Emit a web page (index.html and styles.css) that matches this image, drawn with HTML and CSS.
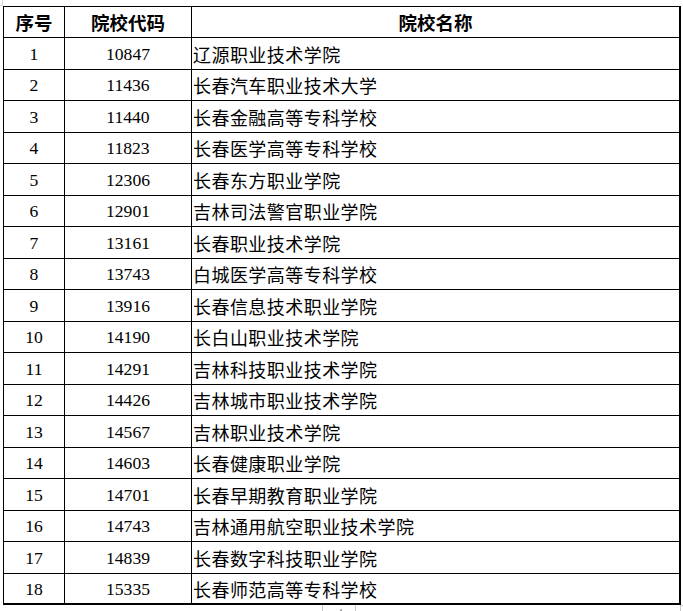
FILE: index.html
```html
<!DOCTYPE html>
<html lang="zh-CN">
<head>
<meta charset="utf-8">
<title>院校名单</title>
<link rel="stylesheet" href="styles.css">
</head>
<body>
<div class="corner"></div>
<table class="list">
  <colgroup><col class="c1"><col class="c2"><col class="c3"></colgroup>
  <thead>
    <tr class="head"><th>序号</th><th>院校代码</th><th>院校名称</th></tr>
  </thead>
  <tbody>
    <tr class="e"><td class="n">1</td><td class="n">10847</td><td class="name">辽源职业技术学院</td></tr>
    <tr class="o"><td class="n">2</td><td class="n">11436</td><td class="name">长春汽车职业技术大学</td></tr>
    <tr class="e"><td class="n">3</td><td class="n">11440</td><td class="name">长春金融高等专科学校</td></tr>
    <tr class="o"><td class="n">4</td><td class="n">11823</td><td class="name">长春医学高等专科学校</td></tr>
    <tr class="e"><td class="n">5</td><td class="n">12306</td><td class="name">长春东方职业学院</td></tr>
    <tr class="o"><td class="n">6</td><td class="n">12901</td><td class="name">吉林司法警官职业学院</td></tr>
    <tr class="e"><td class="n">7</td><td class="n">13161</td><td class="name">长春职业技术学院</td></tr>
    <tr class="o"><td class="n">8</td><td class="n">13743</td><td class="name">白城医学高等专科学校</td></tr>
    <tr class="e"><td class="n">9</td><td class="n">13916</td><td class="name">长春信息技术职业学院</td></tr>
    <tr class="o"><td class="n">10</td><td class="n">14190</td><td class="name">长白山职业技术学院</td></tr>
    <tr class="e"><td class="n">11</td><td class="n">14291</td><td class="name">吉林科技职业技术学院</td></tr>
    <tr class="o"><td class="n">12</td><td class="n">14426</td><td class="name">吉林城市职业技术学院</td></tr>
    <tr class="e"><td class="n">13</td><td class="n">14567</td><td class="name">吉林职业技术学院</td></tr>
    <tr class="o"><td class="n">14</td><td class="n">14603</td><td class="name">长春健康职业学院</td></tr>
    <tr class="e"><td class="n">15</td><td class="n">14701</td><td class="name">长春早期教育职业学院</td></tr>
    <tr class="o"><td class="n">16</td><td class="n">14743</td><td class="name">吉林通用航空职业技术学院</td></tr>
    <tr class="e"><td class="n">17</td><td class="n">14839</td><td class="name">长春数字科技职业学院</td></tr>
    <tr class="o last"><td class="n">18</td><td class="n">15335</td><td class="name">长春师范高等专科学校</td></tr>
  </tbody>
</table>
<div class="foot">
  <div class="handle"><span class="dot"></span></div>
  <div class="mark"></div>
</div>
</body>
</html>
```
FILE: styles.css
```css
html, body {
  margin: 0;
  padding: 0;
  background: #fff;
}
body {
  width: 683px;
  height: 611px;
  overflow: hidden;
  position: relative;
  color: #000;
}
.corner {
  position: absolute;
  left: 0;
  top: 0;
  width: 2px;
  height: 5px;
  border-right: 1px solid #d8d8d8;
  border-bottom: 1px solid #d8d8d8;
}
.list {
  margin: 6px 0 0 3px;
  border-collapse: separate;
  border-spacing: 0;
  table-layout: fixed;
  width: 677px;
  border-top: 1px solid #000;
  border-left: 1px solid #000;
}
.c1 { width: 61px; }
.c2 { width: 127px; }
.c3 { width: 489px; }
.list th,
.list td {
  padding: 0;
  border-right: 1px solid #000;
  border-bottom: 1px solid #000;
  vertical-align: middle;
  line-height: 20px;
  box-sizing: border-box;
}
.list th:last-child,
.list td:last-child {
  border-right-width: 2px;
}
.list tr.last td {
  border-bottom-width: 2px;
}
.head { height: 31px; }
.e { height: 32px; }
.o { height: 31px; }
.list th {
  font-family: "Noto Sans CJK SC", sans-serif;
  font-weight: 700;
  font-size: 18.5px;
  text-align: center;
}
.n {
  font-family: "Liberation Serif", "Times New Roman", serif;
  font-size: 17.6px;
  text-align: center;
  padding-top: 1px;
}
.name {
  font-family: "Noto Sans CJK SC", sans-serif;
  font-size: 18px;
  letter-spacing: 0.45px;
  text-align: left;
  padding-left: 1px !important;
}
.foot {
  display: flex;
  align-items: flex-start;
  height: 6px;
}
.handle {
  margin-left: 322px;
  width: 32px;
  height: 6px;
  border-left: 1px solid #c8c8c8;
  border-right: 1px solid #c8c8c8;
  display: flex;
  justify-content: center;
  align-items: flex-end;
}
.dot {
  width: 2px;
  height: 2px;
  background: #b0b0b0;
  margin-left: 4px;
}
.mark {
  margin-left: 324px;
  width: 2px;
  height: 5px;
  border-left: 1px solid #c8c8c8;
  border-top: 1px solid #c8c8c8;
}
```
